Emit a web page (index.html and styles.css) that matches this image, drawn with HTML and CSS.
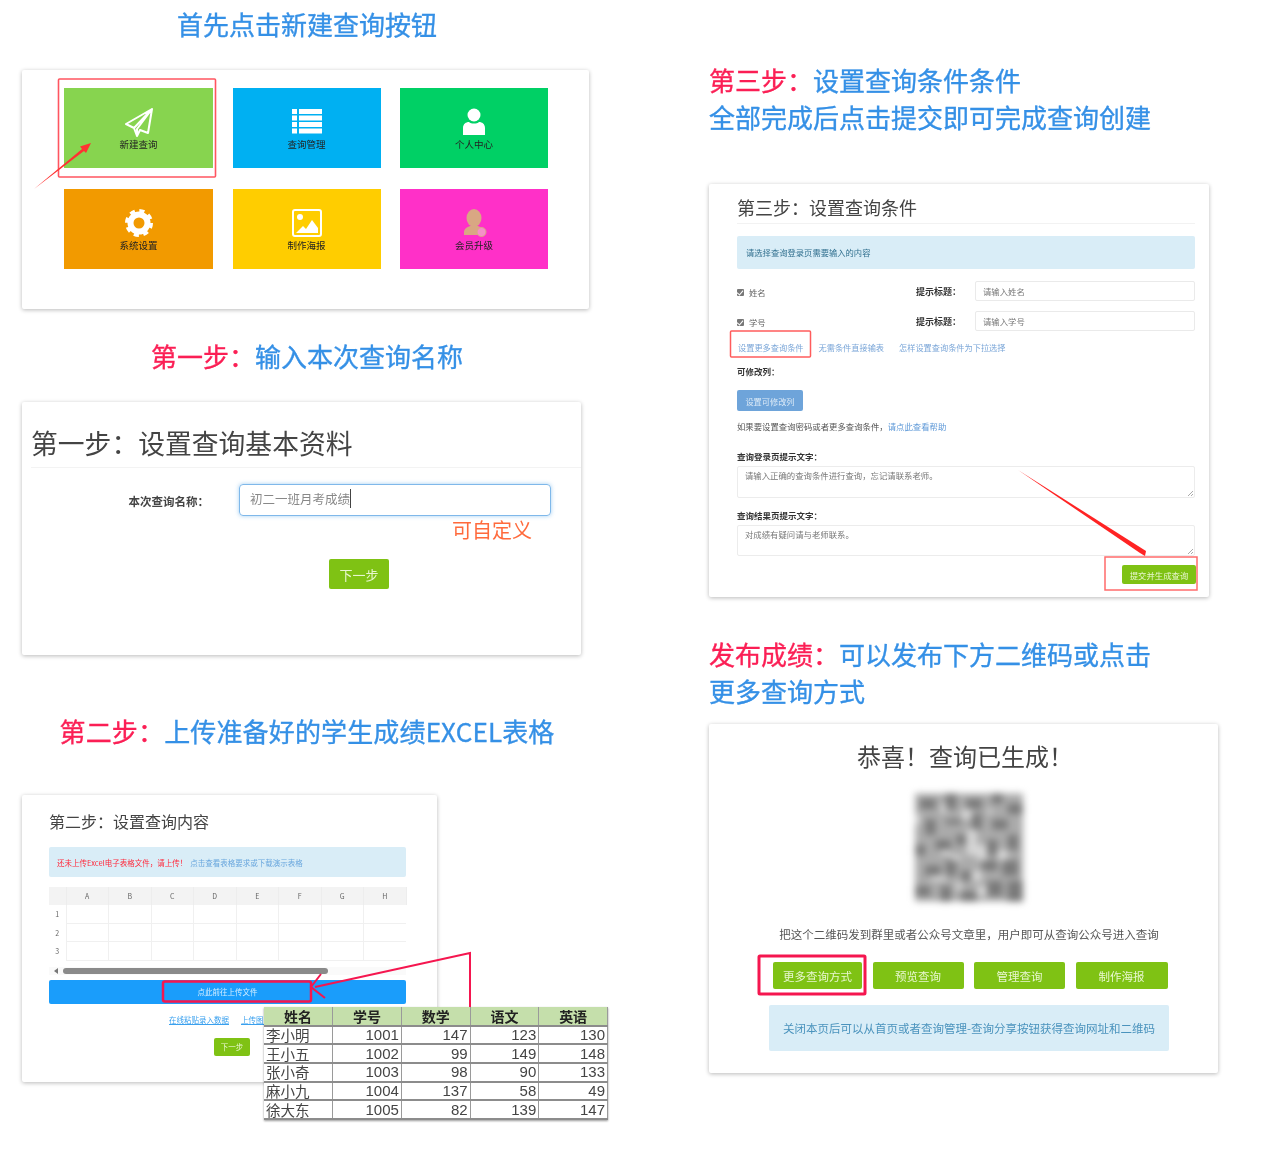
FILE: index.html
```html
<!DOCTYPE html>
<html lang="zh-CN">
<head>
<meta charset="utf-8">
<title>查询创建步骤</title>
<link rel="stylesheet" href="styles.css">
</head>
<body>
<div class="page">
  <div class="col-left">
    <h2 class="head head-center"><span class="blue">首先点击新建查询按钮</span></h2>
    <section class="card card-home">
      <div class="tiles">
        <div class="tile t-green">
          <svg class="ico" viewBox="0 0 30 30"><path d="M28 2 2 17l8 4 3 8 3-6 8 3zM28 2 10 21M28 2 13 22v7" fill="none" stroke="#fff" stroke-width="2" stroke-linejoin="round"/></svg>
          <span>新建查询</span>
        </div>
        <div class="tile t-blue">
          <svg class="ico" viewBox="0 0 30 30"><path d="M0 2h5v5H0zM7 2h23v5H7zM0 8.500h5v5H0zM7 8.500h23v5H7zM0 15h5v5H0zM7 15h23v5H7zM0 21.500h5v5H0zM7 21.500h23v5H7z" fill="#fff"/></svg>
          <span>查询管理</span>
        </div>
        <div class="tile t-emerald">
          <svg class="ico" viewBox="0 0 30 30"><circle cx="15" cy="8" r="6.500" fill="#fff"/><path d="M4 28v-7c0-4 3-6 6-6 2 2 8 2 10 0 3 0 6 2 6 6v7z" fill="#fff"/></svg>
          <span>个人中心</span>
        </div>
        <div class="tile t-orange">
          <svg class="ico" viewBox="0 0 30 30"><circle cx="15" cy="15" r="8.500" fill="none" stroke="#fff" stroke-width="6"/><circle cx="15" cy="15" r="12" fill="none" stroke="#fff" stroke-width="4" stroke-dasharray="5 4.420"/></svg>
          <span>系统设置</span>
        </div>
        <div class="tile t-yellow">
          <svg class="ico" viewBox="0 0 30 30"><rect x="1" y="2" width="28" height="26" rx="2" fill="none" stroke="#fff" stroke-width="2"/><circle cx="8" cy="9" r="3" fill="#fff"/><path d="M4 25l7-7 3 3 6-9 6 8v5z" fill="#fff"/></svg>
          <span>制作海报</span>
        </div>
        <div class="tile t-pink">
          <svg class="ico" viewBox="0 0 30 30"><ellipse cx="15" cy="10" rx="7.500" ry="9" fill="#d9a783"/><path d="M5 27v-3c0-3 3-5 6-6h8c3 1 5 3 5 6v3z" fill="#d9a783"/><circle cx="22.500" cy="24" r="4.500" fill="#f58fc8" stroke="#d9a783"/></svg>
          <span>会员升级</span>
        </div>
      </div>
    </section>

    <h2 class="head head-center head-step1"><span class="red">第一步&#xFF1A;</span><span class="blue">输入本次查询名称</span></h2>
    <section class="card card-basic">
      <h3 class="basic-title">第一步&#xFF1A;设置查询基本资料</h3>
      <div class="basic-row">
        <label class="basic-label">本次查询名称&#xFF1A;</label>
        <div class="basic-input"><span class="caret">初二一班月考成绩</span></div>
      </div>
      <div class="custom-note">可自定义</div>
      <div class="btn btn-next-lg">下一步</div>
    </section>

    <h2 class="head head-center head-step2"><span class="red">第二步&#xFF1A;</span><span class="blue">上传准备好的学生成绩EXCEL表格</span></h2>
    <section class="card card-upload">
      <h3 class="upload-title">第二步&#xFF1A;设置查询内容</h3>
      <div class="alert upload-alert"><span class="alert-red">还未上传Excel电子表格文件&#xFF0C;请上传&#xFF01;</span><span class="alert-link">点击查看表格要求或下载演示表格</span></div>
      <table class="sheet">
        <tr class="sheet-head"><th></th><th>A</th><th>B</th><th>C</th><th>D</th><th>E</th><th>F</th><th>G</th><th>H</th></tr>
        <tr><th>1</th><td></td><td></td><td></td><td></td><td></td><td></td><td></td><td></td></tr>
        <tr><th>2</th><td></td><td></td><td></td><td></td><td></td><td></td><td></td><td></td></tr>
        <tr><th>3</th><td></td><td></td><td></td><td></td><td></td><td></td><td></td><td></td></tr>
      </table>
      <div class="scrollbar"><i class="scroll-arrow"></i><i class="scroll-thumb"></i></div>
      <div class="upload-bar">点此前往上传文件</div>
      <div class="upload-links"><a>在线粘贴录入数据</a><a>上传图片</a></div>
      <div class="btn btn-next-sm">下一步</div>
      <table class="excel">
        <tr class="excel-head"><th>姓名</th><th>学号</th><th>数学</th><th>语文</th><th>英语</th></tr>
        <tr><td class="nm">李小明</td><td>1001</td><td>147</td><td>123</td><td>130</td></tr>
        <tr><td class="nm">王小五</td><td>1002</td><td>99</td><td>149</td><td>148</td></tr>
        <tr><td class="nm">张小奇</td><td>1003</td><td>98</td><td>90</td><td>133</td></tr>
        <tr><td class="nm">麻小九</td><td>1004</td><td>137</td><td>58</td><td>49</td></tr>
        <tr><td class="nm">徐大东</td><td>1005</td><td>82</td><td>139</td><td>147</td></tr>
      </table>
    </section>
  </div>

  <div class="col-right">
    <h2 class="head head-multi"><span class="red">第三步&#xFF1A;</span><span class="blue">设置查询条件条件</span><br><span class="blue">全部完成后点击提交即可完成查询创建</span></h2>
    <section class="card card-cond">
      <h3 class="cond-title">第三步&#xFF1A;设置查询条件</h3>
      <div class="alert cond-alert">请选择查询登录页需要输入的内容</div>
      <div class="cond-row cond-row-first">
        <span class="check-wrap"><i class="check"></i>姓名</span>
        <b>提示标题&#xFF1A;</b>
        <div class="field">请输入姓名</div>
      </div>
      <div class="cond-row">
        <span class="check-wrap"><i class="check"></i>学号</span>
        <b>提示标题&#xFF1A;</b>
        <div class="field">请输入学号</div>
      </div>
      <div class="cond-links"><a>设置更多查询条件</a><a>无需条件直接输表</a><a>怎样设置查询条件为下拉选择</a></div>
      <div class="cond-sub"><b>可修改列&#xFF1A;</b></div>
      <div class="btn-col">设置可修改列</div>
      <div class="cond-help">如果要设置查询密码或者更多查询条件&#xFF0C;<a>请点此查看帮助</a></div>
      <div class="cond-label cond-label-a"><b>查询登录页提示文字&#xFF1A;</b></div>
      <div class="textarea ta-a">请输入正确的查询条件进行查询&#xFF0C;忘记请联系老师。</div>
      <div class="cond-label cond-label-b"><b>查询结果页提示文字&#xFF1A;</b></div>
      <div class="textarea ta-b">对成绩有疑问请与老师联系。</div>
      <div class="cond-foot"><div class="btn btn-submit">提交并生成查询</div></div>
    </section>

    <h2 class="head head-multi head-publish"><span class="red">发布成绩&#xFF1A;</span><span class="blue">可以发布下方二维码或点击</span><br><span class="blue">更多查询方式</span></h2>
    <section class="card card-done">
      <h3 class="done-title">恭喜&#xFF01;查询已生成&#xFF01;</h3>
      <div class="qr">
        <svg class="qr-svg" viewBox="0 0 21 21"><rect width="21" height="21" fill="#ababab"/><path fill="#7a7a7a" d="M1 1h3v2H1zM6 0h2v3H6zM10 1h3v2h-3zM15 0h2v2h-2zM18 2h3v2h-3zM2 5h2v3H2zM6 5h3v1H6zM11 4h2v3h-2zM15 5h3v2h-3zM0 10h2v2H0zM4 9h3v2H4zM8 8h2v2H8zM14 9h2v3h-2zM18 8h2v3h-2zM2 14h3v2H2zM6 13h2v3H6zM9 15h2v2H9zM13 13h3v2h-3zM17 13h3v3h-3zM0 18h3v2H0zM5 18h2v3H5zM9 19h3v2H9zM14 17h3v3h-3zM18 17h3v4h-3z"/><path fill="#d6d6d6" d="M0 4h1v2H0zM5 2h1v2H5zM9 3h2v2H9zM14 3h1v1h-1zM10 7h2v5h-2zM12 10h2v3h-2zM5 11h2v1H5zM7 12h2v1H7zM3 16h3v1H3zM11 15h2v2h-2zM16 11h2v2h-2zM8 17h1v2H8zM12 18h2v2h-2z"/></svg>
      </div>
      <p class="done-text">把这个二维码发到群里或者公众号文章里&#xFF0C;用户即可从查询公众号进入查询</p>
      <div class="done-btns">
        <div class="btn">更多查询方式</div>
        <div class="btn">预览查询</div>
        <div class="btn">管理查询</div>
        <div class="btn">制作海报</div>
      </div>
      <div class="alert done-alert">关闭本页后可以从首页或者查询管理-查询分享按钮获得查询网址和二维码</div>
    </section>
  </div>

  <svg class="marks" viewBox="0 0 1261 1174">
    <rect x="58.500" y="79" width="157" height="98" fill="none" stroke="#ff5560" stroke-width="1.600" rx="1"/>
    <polygon points="34,189 82,149 80,146.500 91,143 86,153 84,151" fill="#ff3232"/>
    <path d="M470 1007V953L315 987" fill="none" stroke="#f5164f" stroke-width="2"/>
    <path d="M321 974 311 987 325 998" fill="none" stroke="#f5164f" stroke-width="2"/>
    <rect x="163" y="981.500" width="148" height="20" rx="2" fill="none" stroke="#f5164f" stroke-width="2.500"/>
    <rect x="730.500" y="331" width="80" height="26" rx="1" fill="none" stroke="#ff5c5c" stroke-width="1.500"/>
    <polygon points="1018,470 1146,551 1145,556 1140,553" fill="#ff2323"/>
    <rect x="1105" y="557" width="92" height="33" fill="none" stroke="#ff6b6b" stroke-width="1.500"/>
    <rect x="759" y="956" width="106" height="38" rx="1" fill="none" stroke="#f5164f" stroke-width="3"/>
  </svg>
</div>
</body>
</html>
```

FILE: styles.css
```css
* { box-sizing: border-box; }
html, body { margin: 0; padding: 0; background: #fff; }
body { font-family: "Noto Sans CJK SC", "Liberation Sans", sans-serif; color: #333; }
h2, h3, p { margin: 0; font-weight: 400; }

.page {
  position: relative;
  width: 1261px;
  height: 1174px;
  display: flex;
  overflow: hidden;
  filter: blur(0.6px);
}
.col-left { width: 709px; padding: 6px 0 0 22px; flex: none; }
.col-right { flex: 1; padding-top: 61px; }

.head { font-size: 26px; line-height: 36px; white-space: nowrap; -webkit-text-stroke: 0.35px currentColor; }
.head-center { width: 570px; text-align: center; }
.head-step1 { margin-top: 29px; }
.head-step2 { margin-top: 58px; letter-spacing: 0.15px; }
.head-multi { line-height: 37px; padding-left: 0; }
.head-publish { margin-top: 38px; }
.blue { color: #3590e6; }
.red { color: #fb1f55; }

.card {
  position: relative;
  background: #fff;
  border-radius: 2px;
  box-shadow: 0 1px 4px rgba(0, 0, 0, .28);
}

/* home tiles */
.card-home { width: 567px; height: 239px; margin-top: 28px; padding: 18px 0 0 42px; }
.tiles { display: grid; grid-template-columns: 149px 148px 148px; grid-auto-rows: 80px; gap: 21px 19.500px; }
.tile {
  display: flex;
  flex-direction: column;
  align-items: center;
  padding-top: 19px;
  font-size: 9.500px;
  line-height: 12px;
  color: #222;
}
.ico { width: 30px; height: 30px; margin-bottom: 1px; }
.t-green { background: #87d44f; }
.t-blue { background: #00b0f2; }
.t-emerald { background: #00d065; }
.t-orange { background: #f29a00; }
.t-yellow { background: #ffcd00; }
.t-pink { background: #ff30c8; }

/* step one */
.card-basic { width: 559px; height: 253px; margin-top: 28px; padding-top: 21px; }
.basic-title {
  margin-left: 9px;
  font-size: 26.800px;
  line-height: 40px;
  height: 45px;
  padding-bottom: 4px;
  border-bottom: 1px solid #f3f3f3;
  color: #444;
  white-space: nowrap;
}
.basic-row { display: flex; align-items: center; margin-top: 16px; }
.basic-label { width: 187px; text-align: right; font-size: 11.500px; font-weight: 700; color: #444; padding-top: 2px; white-space: nowrap; }
.basic-input {
  width: 312px;
  height: 32px;
  margin-left: 30px;
  padding-left: 10px;
  border: 1px solid #7fb8ea;
  border-radius: 4px;
  box-shadow: 0 0 4px rgba(102, 175, 233, .6);
  font-size: 12.500px;
  line-height: 28px;
  color: #888;
}
.caret { border-right: 1px solid #444; }
.custom-note { margin-left: 430px; font-size: 20px; line-height: 28px; color: #ff6a3c; }
.btn {
  display: flex;
  align-items: center;
  justify-content: center;
  background: #7fc214;
  border-radius: 2px;
  color: #e8f7cf;
}
.btn-next-lg { width: 60px; height: 30px; margin: 15px 0 0 307px; font-size: 13px; }

/* step two */
.card-upload { width: 415px; height: 287px; margin-top: 46px; padding: 14px 31px 0 27px; }
.upload-title { font-size: 16px; line-height: 24px; color: #444; white-space: nowrap; }
.alert { background: #d9edf7; border-radius: 2px; color: #31708f; }
.upload-alert { display: flex; align-items: center; height: 30px; margin-top: 14px; padding-left: 8px; font-size: 7.500px; white-space: nowrap; }
.alert-red { color: #ff2a3c; margin-right: 3px; }
.alert-link { color: #6aa7de; }
.sheet { width: 357px; margin-top: 10px; border-collapse: collapse; table-layout: fixed; font-size: 7px; color: #666; }
.sheet th { width: 42.500px; font-weight: 400; padding: 0; }
.sheet th:first-child { width: 17px; }
.sheet tr { height: 18.300px; }
.sheet td { border: 1px solid #f0f0f0; border-top: 0; }
.sheet tr td:last-child { border-right: 0; }
.sheet-head th { background: #f3f3f3; border-right: 1px solid #ededed; }
.scrollbar { display: flex; align-items: center; height: 8px; margin-top: 6px; background: #fafafa; }
.scroll-arrow { width: 0; height: 0; margin-left: 5px; border: 3px solid transparent; border-right: 4px solid #777; border-left: 0; }
.scroll-thumb { width: 265px; height: 6px; margin-left: 5px; border-radius: 3px; background: #8a8a8a; }
.upload-bar {
  height: 24px;
  margin-top: 5px;
  background: #1a9dfb;
  border-radius: 2px;
  text-align: center;
  font-size: 7.500px;
  line-height: 24px;
  color: #d5eeff;
}
.upload-links { display: flex; gap: 12px; margin: 10px 0 0 120px; font-size: 7.500px; line-height: 12px; color: #3aa0ee; white-space: nowrap; }
.upload-links a { text-decoration: underline; }
.btn-next-sm { width: 36px; height: 18px; margin: 12px 0 0 165px; font-size: 7.500px; }
.excel {
  position: absolute;
  left: 242px;
  top: 212px;
  width: 344px;
  height: 113px;
  border-collapse: collapse;
  table-layout: fixed;
  background: #fff;
  box-shadow: 0 1px 2px rgba(0, 0, 0, .4);
  font-size: 15px;
  color: #444;
}
.excel th, .excel td { padding: 0 2px; border-bottom: 2px solid #8c8c8c; border-right: 1px solid #9a9a9a; line-height: 16px; white-space: nowrap; }
.excel th { background: #c5dfab; font-size: 14px; font-weight: 700; text-align: center; color: #222; }
.excel td { text-align: right; font-family: "Liberation Sans", sans-serif; }
.excel td.nm { text-align: left; font-family: "Noto Sans CJK SC", sans-serif; font-size: 14.500px; }
.excel tr { height: 18.500px; }

/* step three */
.card-cond { width: 500px; height: 413px; margin-top: 49px; padding: 11px 14px 0 28px; font-size: 8.400px; line-height: 12px; color: #555; }
.cond-title { height: 29px; font-size: 18px; line-height: 24px; color: #444; border-bottom: 1px solid #f2f2f2; white-space: nowrap; }
.cond-alert { display: flex; align-items: center; height: 33px; margin-top: 12px; padding-bottom: 1px; padding-left: 9px; font-size: 8.300px; }
.cond-row { display: grid; grid-template-columns: 179px 59px 220px; align-items: center; height: 20px; margin-top: 10px; }
.cond-row-first { margin-top: 12px; }
.cond-row b { padding-top: 2px; font-size: 9px; color: #333; white-space: nowrap; }
.check-wrap { display: flex; align-items: center; gap: 5px; color: #666; padding-top: 2px; }
.check { position: relative; width: 7px; height: 7px; border-radius: 1px; background: #777; }
.check::after { content: ""; position: absolute; left: 1px; top: 0; width: 3px; height: 5px; border: solid #fff; border-width: 0 1px 1px 0; transform: rotate(40deg); }
.field { height: 20px; padding-left: 7px; border: 1px solid #eaeaea; border-radius: 2px; line-height: 18px; color: #777; }
.cond-links { display: flex; gap: 15px; margin-top: 10px; padding-left: 1px; color: #7aa6d8; white-space: nowrap; font-size: 8.200px; }
.cond-sub { margin-top: 12px; }
.cond-sub b, .cond-label b { color: #333; font-size: 8.500px; }
.btn-col { display: flex; align-items: center; justify-content: center; width: 66px; height: 21px; margin-top: 13px; border-radius: 2px; background: #6ea4da; color: #dceaf7; font-size: 8.200px; }
.cond-help { margin-top: 9px; white-space: nowrap; }
.cond-help a { color: #5e99d8; }
.cond-label { white-space: nowrap; }
.cond-label-a { margin-top: 18px; }
.cond-label-b { margin-top: 11px; }
.textarea {
  margin-top: 4px;
  padding: 2px 7px;
  border: 1px solid #ececec;
  border-radius: 2px;
  color: #777;
  background: linear-gradient(135deg, transparent 50%, #aaa 50%, #aaa 60%, transparent 60%, transparent 75%, #aaa 75%, #aaa 85%, transparent 85%) right 1px bottom 1px / 6px 6px no-repeat;
}
.ta-a { height: 32px; }
.ta-b { height: 31px; }
.cond-foot { display: flex; justify-content: flex-end; margin: 9px -1px 0 0; }
.btn-submit { width: 74px; height: 19px; font-size: 8.400px; }

/* done */
.card-done { width: 509px; height: 349px; margin-top: 15px; padding-top: 14px; }
.done-title { margin-left: 3px; text-align: center; font-size: 24px; line-height: 36px; color: #444; white-space: nowrap; }
.qr { width: 108px; height: 109px; margin: 19px 0 0 206px; }
.qr-svg { display: block; width: 100%; height: 100%; filter: blur(3.600px); }
.done-text { width: 400px; margin: 24px 0 0 60px; text-align: center; font-size: 11.500px; line-height: 16px; color: #555; white-space: nowrap; }
.done-btns { display: grid; grid-template-columns: 89px 91px 91px 92px; column-gap: 10.500px; margin: 20px 0 0 64px; height: 27px; font-size: 11.500px; }
.done-alert { display: flex; align-items: center; justify-content: center; width: 400px; height: 46px; margin: 16px 0 0 60px; font-size: 11.500px; color: #4a93bd; white-space: nowrap; }

.marks { position: absolute; left: 0; top: 0; width: 1261px; height: 1174px; pointer-events: none; }
```
